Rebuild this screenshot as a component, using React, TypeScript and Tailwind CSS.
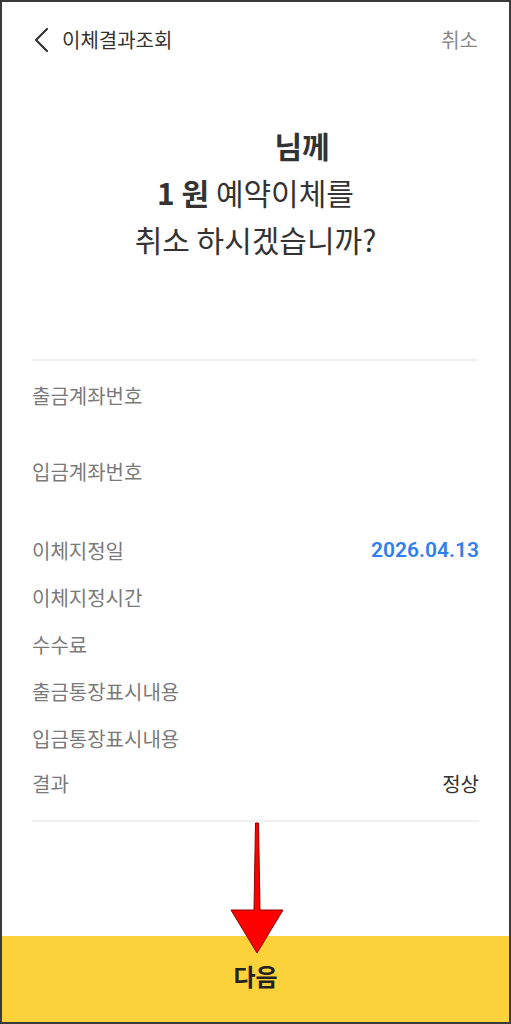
import React from "react";

const font = { fontFamily: '"Noto Sans CJK KR", Roboto, sans-serif' };

interface RowProps {
  label: string;
  value?: string;
  valueClass?: string;
  height?: string;
}

const Row: React.FC<RowProps> = ({ label, value, valueClass, height = "h-[47px]" }) => (
  <div className={height}>
    <div className="flex h-[47px] items-center justify-between">
      <span className="text-[20px] text-[#7a7a7a]">{label}</span>
      {value && <span className={valueClass}>{value}</span>}
    </div>
  </div>
);

export default function App() {
  return (
    <div
      className="relative flex h-[1024px] w-[511px] flex-col border-2 border-[#3a3a3a] bg-white"
      style={font}
    >
      {/* Header */}
      <div className="flex h-[76px] shrink-0 items-center justify-between pl-[31px] pr-[31px]">
        <div className="flex items-center gap-[11px]">
          <svg width="18" height="26" viewBox="0 0 18 26" fill="none">
            <path d="M14 2 L3 13 L14 24" stroke="#333" strokeWidth="2.2" strokeLinecap="round" strokeLinejoin="round" />
          </svg>
          <span className="text-[20px] text-[#333]">이체결과조회</span>
        </div>
        <span className="text-[20px] text-[#8a8a8a]">취소</span>
      </div>

      <div className="flex flex-1 flex-col px-[30px]">
        {/* Title */}
        <div className="pt-[44px] text-center text-[30px] leading-[47px] text-[#333]">
          <div>
            <span className="inline-block w-[93px]" />
            <span className="font-bold">님께</span>
          </div>
          <div>
            <span className="font-bold">1 원</span> 예약이체를
          </div>
          <div>취소 하시겠습니까?</div>
        </div>

        <div className="mt-[96px] h-[2px] bg-[#f0f0f0]" />

        {/* Details */}
        <div className="pt-[11px] pb-[13px]">
          <Row label="출금계좌번호" height="h-[76px]" />
          <Row label="입금계좌번호" height="h-[79px]" />
          <Row
            label="이체지정일"
            value="2026.04.13"
            valueClass="text-[21px] font-semibold text-[#2f80ed] [font-family:Roboto,sans-serif]"
          />
          <Row label="이체지정시간" />
          <Row label="수수료" />
          <Row label="출금통장표시내용" />
          <Row label="입금통장표시내용" height="h-[45px]" />
          <Row label="결과" value="정상" valueClass="text-[20px] text-[#333]" />
        </div>

        <div className="h-[2px] bg-[#f0f0f0]" />
      </div>

      {/* Bottom button */}
      <div className="flex h-[86px] shrink-0 items-center justify-center bg-[#fcd23b] pb-[6px]">
        <span className="text-[24px] font-bold text-[#222]">다음</span>
      </div>

      {/* Red arrow annotation */}
      <svg
        className="absolute left-[226px] top-[818px]"
        width="60"
        height="136"
        viewBox="0 0 60 136"
      >
        <polygon
          points="27.5,3 30.5,3 32,90 55,90 29,133 3,90 26,90"
          fill="#ff0000"
          stroke="#8b0000"
          strokeWidth="1"
          strokeLinejoin="round"
        />
      </svg>
    </div>
  );
}
